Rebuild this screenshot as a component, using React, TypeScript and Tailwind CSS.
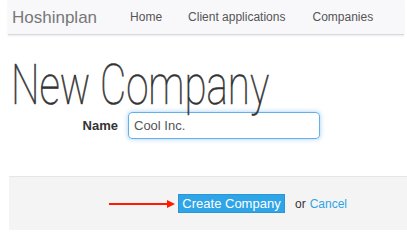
import React from "react";

export default function App() {
  return (
    <div className="w-[407px] h-[235px] bg-white overflow-hidden relative" style={{ fontFamily: '"Liberation Sans", Arial, sans-serif' }}>
      {/* navbar */}
      <div className="ml-[8px] mr-[3px] h-[35px] bg-[#f8f8fa] border-b border-[#d8d8dc] shadow-[0_1px_2px_rgba(0,0,0,0.08)] flex items-center">
        <span className="ml-[4px] text-[17px] text-[#777] leading-none">Hoshinplan</span>
        <span className="ml-[33px] text-[12px] text-[#555] leading-none">Home</span>
        <span className="ml-[26px] text-[12px] text-[#555] leading-none">Client applications</span>
        <span className="ml-[27px] text-[12px] text-[#555] leading-none">Companies</span>
      </div>
      {/* title */}
      <div className="mt-[20px] ml-[11px] h-[60px] origin-left scale-x-[0.72] text-[56px] leading-[60px] font-thin text-[#333] whitespace-nowrap [-webkit-text-stroke:0.6px_#333]" style={{ fontFamily: 'Roboto, sans-serif' }}>
        New Company
      </div>
      {/* form row */}
      <div className="mt-[-3px] flex items-center">
        <label className="w-[118px] text-right text-[13px] font-bold text-[#333]">Name</label>
        <div className="ml-[10px] w-[192px] h-[27px] border border-[#66afe9] rounded-[4px] shadow-[0_0_5px_rgba(102,175,233,0.6)] flex items-center px-[5px] text-[13px] text-[#555]">
          Cool Inc.
        </div>
      </div>
      {/* form actions */}
      <div className="mt-[37px] ml-[9px] h-[54px] bg-[#f4f4f4] border-t border-[#e6e6e6] flex items-center">
        <svg width="69" height="8" viewBox="0 0 69 8" className="ml-[100px] mt-[1px]">
          <line x1="0" y1="4" x2="62" y2="4" stroke="#ff1a00" strokeWidth="2" />
          <polygon points="58,0 66,4 58,8" fill="#ff1a00" />
        </svg>
        <div className="w-[107px] h-[19px] bg-[#2fa4e7] border border-[#2a96d6] text-white text-[13px] whitespace-nowrap flex items-center justify-center leading-none">
          Create Company
        </div>
        <span className="ml-[10px] text-[12px] text-[#333]">or</span>
        <span className="ml-[4px] text-[12px] text-[#2fa4e7]">Cancel</span>
      </div>
    </div>
  );
}
